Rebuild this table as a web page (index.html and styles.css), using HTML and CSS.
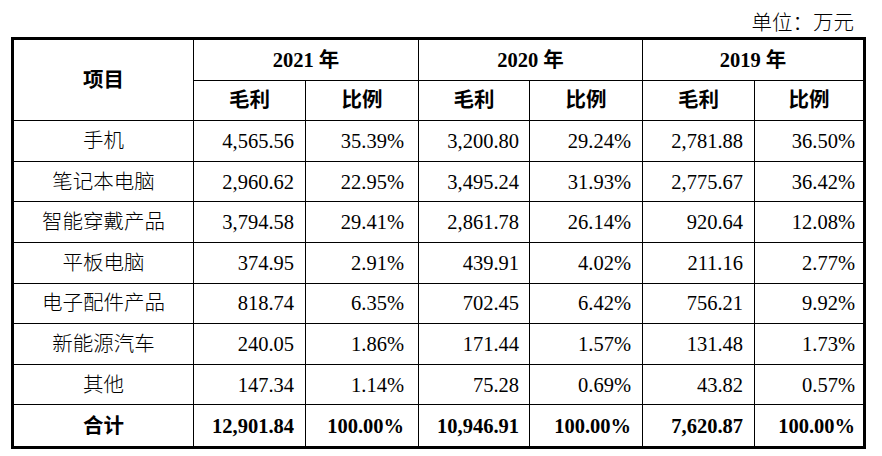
FILE: index.html
```html
<!DOCTYPE html>
<html lang="zh-CN">
<head>
<meta charset="utf-8">
<title>毛利构成</title>
<link rel="stylesheet" href="styles.css">
</head>
<body>
<div class="page">
  <div class="unit">单位：万元</div>
  <table class="grid">
    <colgroup>
      <col class="c0"><col class="c1"><col class="c2"><col class="c3"><col class="c4"><col class="c5"><col class="c6">
    </colgroup>
    <thead>
      <tr>
        <th rowspan="2" class="item">项目</th>
        <th colspan="2">2021 年</th>
        <th colspan="2">2020 年</th>
        <th colspan="2" class="last">2019 年</th>
      </tr>
      <tr>
        <th>毛利</th><th>比例</th><th>毛利</th><th>比例</th><th>毛利</th><th class="last">比例</th>
      </tr>
    </thead>
    <tbody>
      <tr><td>手机</td><td>4,565.56</td><td>35.39%</td><td>3,200.80</td><td>29.24%</td><td>2,781.88</td><td>36.50%</td></tr>
      <tr><td>笔记本电脑</td><td>2,960.62</td><td>22.95%</td><td>3,495.24</td><td>31.93%</td><td>2,775.67</td><td>36.42%</td></tr>
      <tr><td>智能穿戴产品</td><td>3,794.58</td><td>29.41%</td><td>2,861.78</td><td>26.14%</td><td>920.64</td><td>12.08%</td></tr>
      <tr><td>平板电脑</td><td>374.95</td><td>2.91%</td><td>439.91</td><td>4.02%</td><td>211.16</td><td>2.77%</td></tr>
      <tr><td>电子配件产品</td><td>818.74</td><td>6.35%</td><td>702.45</td><td>6.42%</td><td>756.21</td><td>9.92%</td></tr>
      <tr><td>新能源汽车</td><td>240.05</td><td>1.86%</td><td>171.44</td><td>1.57%</td><td>131.48</td><td>1.73%</td></tr>
      <tr><td>其他</td><td>147.34</td><td>1.14%</td><td>75.28</td><td>0.69%</td><td>43.82</td><td>0.57%</td></tr>
      <tr class="total"><td>合计</td><td>12,901.84</td><td>100.00%</td><td>10,946.91</td><td>100.00%</td><td>7,620.87</td><td>100.00%</td></tr>
    </tbody>
  </table>
</div>
</body>
</html>
```
FILE: styles.css
```css
html, body {
  margin: 0;
  padding: 0;
  background: #ffffff;
}
body {
  font-family: "Liberation Serif", "Noto Sans CJK SC", serif;
  font-size: 20.5px;
  color: #000000;
}
.page {
  width: 855px;
  margin-left: 11px;
}
.unit {
  height: 37px;
  box-sizing: border-box;
  padding-top: 9px;
  padding-right: 12px;
  line-height: 28px;
  text-align: right;
  font-weight: 300;
}
.grid {
  width: 855px;
  table-layout: fixed;
  border-collapse: separate;
  border-spacing: 0;
  border: 3px solid #000000;
}
.c0 { width: 180px; }
.c1 { width: 112px; }
.c2 { width: 113px; }
.c3 { width: 111px; }
.c4 { width: 113px; }
.c5 { width: 112px; }
.c6 { width: 108px; }
.grid tr {
  height: 40.6px;
}
.grid th,
.grid td {
  padding: 0;
  border-right: 1px solid #000000;
  border-bottom: 1px solid #000000;
  line-height: 24px;
  white-space: nowrap;
  overflow: hidden;
}
.grid th {
  font-weight: 700;
  text-align: center;
}
.grid th.last,
.grid td:last-child {
  border-right: none;
}
.grid tbody tr:last-child td {
  border-bottom: none;
}
.grid td {
  text-align: right;
  padding-right: 11px;
  font-weight: 300;
}
.grid td:first-child {
  text-align: center;
  padding-right: 0;
}
.grid td:nth-child(3) { padding-right: 14px; }
.grid td:nth-child(4) { padding-right: 10px; }
.grid td:nth-child(7) { padding-right: 8px; }
.grid tr.total td {
  font-weight: 700;
}
```
